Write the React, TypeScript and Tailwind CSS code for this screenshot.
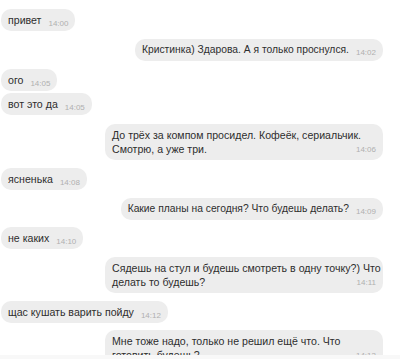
import React from "react";

type Msg = { side: "l" | "r"; lines: string[]; time: string; mt: number };

const msgs: Msg[] = [
  { side: "l", lines: ["привет"], time: "14:00", mt: 9 },
  { side: "r", lines: ["Кристинка) Здарова. А я только проснулся."], time: "14:02", mt: 8 },
  { side: "l", lines: ["ого"], time: "14:05", mt: 8 },
  { side: "l", lines: ["вот это да"], time: "14:05", mt: 2 },
  { side: "r", lines: ["До трёх за компом просидел. Кофеёк, сериальчик.", "Смотрю, а уже три."], time: "14:06", mt: 9 },
  { side: "l", lines: ["ясненька"], time: "14:08", mt: 8 },
  { side: "r", lines: ["Какие планы на сегодня? Что будешь делать?"], time: "14:09", mt: 8 },
  { side: "l", lines: ["не каких"], time: "14:10", mt: 7 },
  { side: "r", lines: ["Сядешь на стул и будешь смотреть в одну точку?) Что", "делать то будешь?"], time: "14:11", mt: 8 },
  { side: "l", lines: ["щас кушать варить пойду"], time: "14:12", mt: 8 },
  { side: "r", lines: ["Мне тоже надо, только не решил ещё что. Что", "готовить будешь?"], time: "14:13", mt: 7 },
];

function Bubble({ m }: { m: Msg }) {
  const multi = m.lines.length > 1;
  const right = m.side === "r";
  return (
    <div
      className={`flex ${right ? "justify-end" : "justify-start"}`}
      style={{ marginTop: m.mt }}
    >
      {multi ? (
        <div className="w-[278px] rounded-[10px] bg-[#ededed] px-[7px] py-[4px] text-[10.6px] leading-[14px] text-[#2e2e2e]">
          <div className="whitespace-nowrap">{m.lines[0]}</div>
          <div className="flex items-start justify-between whitespace-nowrap">
            <span>{m.lines[1]}</span>
            <span className="relative top-[4px] text-[8px] leading-[8px] text-[#b0b0b0]">{m.time}</span>
          </div>
        </div>
      ) : (
        <div
          className={`whitespace-nowrap rounded-[10px] bg-[#ededed] px-[7px] py-[4px] leading-[14px] text-[#2e2e2e] ${
            right ? "text-[10.3px]" : "text-[10.6px]"
          }`}
        >
          <span>{m.lines[0]}</span>
          <span className="relative top-[2px] ml-[7px] text-[8px] leading-[8px] text-[#b0b0b0]">{m.time}</span>
        </div>
      )}
    </div>
  );
}

export default function App() {
  return (
    <div
      className="relative h-[359px] w-[400px] overflow-hidden bg-white"
      style={{ fontFamily: '"Liberation Sans", Arial, sans-serif' }}
    >
      <div className="flex flex-col pl-[1px] pr-[17px]">
        {msgs.map((m, i) => (
          <Bubble key={i} m={m} />
        ))}
      </div>
      <div className="absolute bottom-0 left-0 h-[4px] w-full bg-[#f8f8f8]" />
    </div>
  );
}
